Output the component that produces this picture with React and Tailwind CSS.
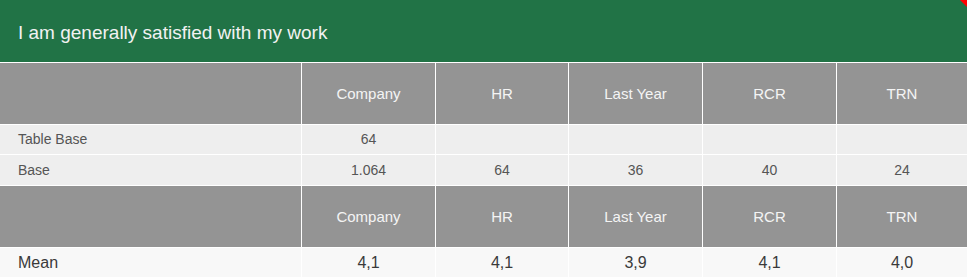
const cols = ['Company', 'HR', 'Last Year', 'RCR', 'TRN']

const grid = 'grid grid-cols-[301px_133px_132px_133px_133px_1fr] gap-x-px'

function HeadRow() {
  return (
    <div className={`${grid} bg-white h-[61px]`}>
      <div className="bg-[#949494]" />
      {cols.map((c) => (
        <div key={c} className="bg-[#949494] flex items-center justify-center text-[15px] text-[#f4f4f4] pt-[2px]">
          {c}
        </div>
      ))}
    </div>
  )
}

function BodyRow({ label, values, height, big }) {
  const bg = big ? 'bg-[#f8f8f8]' : 'bg-[#eeeeee]'
  const text = big ? 'text-[16px] text-[#3a3a3a]' : 'text-[14px] text-[#555555]'
  return (
    <div className={`${grid} bg-white ${height}`}>
      <div className={`${bg} ${text} flex items-center pl-[18px]`}>{label}</div>
      {values.map((v, i) => (
        <div key={i} className={`${bg} ${text} flex items-center justify-center`}>
          {v}
        </div>
      ))}
    </div>
  )
}

export default function App() {
  return (
    <div className="w-[967px] h-[277px] overflow-hidden bg-white font-['Liberation_Sans',Arial,sans-serif]">
      <div className="relative h-[62px] bg-[#217346] flex items-center pl-[18px] pt-[5px]">
        <span className="text-[19px] text-[#f2f2f2]">I am generally satisfied with my work</span>
        <svg className="absolute top-0 right-0" width="7" height="7" viewBox="0 0 7 7">
          <polygon points="0,0 7,0 7,7" fill="#ff0000" />
        </svg>
      </div>
      <div className="flex flex-col gap-y-px bg-white pt-px">
        <HeadRow />
        <BodyRow label="Table Base" values={['64', '', '', '', '']} height="h-[29px]" />
        <BodyRow label="Base" values={['1.064', '64', '36', '40', '24']} height="h-[30px]" />
        <HeadRow />
        <BodyRow label="Mean" values={['4,1', '4,1', '3,9', '4,1', '4,0']} height="h-[30px]" big />
      </div>
    </div>
  )
}
